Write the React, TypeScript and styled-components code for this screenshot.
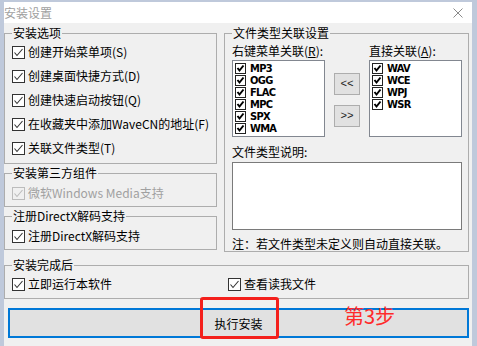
import styled, { createGlobalStyle } from "styled-components";

const GlobalStyle = createGlobalStyle`
  html, body {
    margin: 0;
    padding: 0;
    background: #f0f0f0;
  }
  body {
    font-family: "Noto Sans CJK SC", "Noto Sans", sans-serif;
    font-size: 12px;
    color: #000;
  }
`;

const Window = styled.div`
  position: relative;
  width: 477px;
  height: 346px;
  box-sizing: border-box;
  background: #f0f0f0;
  border-left: 4px solid #bfc9db;
  border-right: 5px solid #bfc9db;
  border-top: 2px solid #bfc9db;
  display: flex;
  flex-direction: column;
  overflow: hidden;
`;

const TitleBar = styled.div`
  height: 21px;
  background: #fff;
  display: flex;
  align-items: center;
  padding-right: 9px;
  color: #a0a0a0;
  font-size: 12px;
`;

const CloseBtn = styled.span`
  margin-left: auto;
  display: flex;
`;

const Body = styled.div`
  display: flex;
  flex-direction: column;
  padding: 3px 3px 0 0;
`;

const TopArea = styled.div`
  display: grid;
  grid-template-columns: 213px 1fr;
  column-gap: 7px;
`;

const LeftColumn = styled.div`
  display: flex;
  flex-direction: column;
  gap: 2px;
`;

const GroupBox = styled.fieldset<{ $pad: string }>`
  margin: 0;
  min-width: 0;
  box-sizing: border-box;
  border: 1px solid #adadad;
  padding: ${(p) => p.$pad};

  legend {
    padding: 0 1px;
    line-height: 14px;
    font-size: 12px;
  }
`;

const CheckRow = styled.div<{ $h: number; $disabled?: boolean }>`
  height: ${(p) => p.$h}px;
  display: flex;
  align-items: center;
  gap: 3px;
  line-height: 14px;
  white-space: nowrap;
  color: ${(p) => (p.$disabled ? "#a0a0a0" : "#000")};
`;

const Box = styled.span<{ $disabled?: boolean }>`
  width: 13px;
  height: 13px;
  box-sizing: border-box;
  flex: none;
  display: inline-flex;
  align-items: center;
  justify-content: center;
  border: 1px solid ${(p) => (p.$disabled ? "#bcbcbc" : "#333")};
  background: ${(p) => (p.$disabled ? "#f0f0f0" : "#fff")};
`;

const ListsGrid = styled.div`
  display: grid;
  grid-template-columns: 93px 26px 93px;
  grid-template-rows: 14px 77px;
  justify-content: space-between;
  row-gap: 2px;
  margin-top: 4px;
`;

const Label = styled.div`
  line-height: 14px;
  white-space: nowrap;
`;

const ListBox = styled.div`
  border: 1px solid #828790;
  background: #fff;
  padding: 1px 2px;
  box-sizing: border-box;
  overflow: hidden;
`;

const ListItem = styled.div`
  height: 12px;
  display: flex;
  align-items: center;
  gap: 4px;
  font-family: "DejaVu Sans Condensed", "Liberation Sans", sans-serif;
  font-weight: bold;
  font-size: 11px;
  letter-spacing: -0.7px;
`;

const SmallBox = styled.span`
  width: 11px;
  height: 11px;
  box-sizing: border-box;
  border: 1px solid #222;
  background: #fff;
  flex: none;
  display: inline-flex;
  align-items: center;
  justify-content: center;
`;

const MoveButtons = styled.div`
  display: flex;
  flex-direction: column;
  gap: 10px;
  padding-top: 13px;
`;

const SmallButton = styled.button`
  width: 26px;
  height: 22px;
  padding: 0;
  background: #e1e1e1;
  border: 1px solid #adadad;
  font-family: "Liberation Mono", monospace;
  font-size: 11px;
  color: #222;
`;

const DescLabel = styled(Label)`
  margin-top: 8px;
`;

const TextArea = styled.div`
  margin-top: 3px;
  height: 68px;
  border: 1px solid #7a7a7a;
  background: #fff;
  box-sizing: border-box;
`;

const Note = styled(Label)`
  margin-top: 7px;
`;

const AfterGroup = styled(GroupBox)`
  margin-top: 6px;
  display: grid;
  grid-template-columns: 216px 1fr;
`;

const InstallButton = styled.button`
  margin: 9px 0 0 4px;
  height: 30px;
  border: 2px solid #0078d7;
  background: #e1e1e1;
  font-family: inherit;
  font-size: 12px;
  color: #000;
`;

const RedBox = styled.div`
  position: absolute;
  left: 196px;
  top: 295px;
  width: 79px;
  height: 42px;
  box-sizing: border-box;
  border: 3px solid #f4201c;
  border-radius: 3px;
`;

const StepText = styled.div`
  position: absolute;
  left: 340px;
  top: 303px;
  font-size: 20px;
  line-height: 22px;
  color: #ff2a2a;
  font-family: "Noto Sans CJK SC", sans-serif;
`;

const Grip = styled.div`
  position: absolute;
  left: 468px;
  top: 171px;
  width: 5px;
  height: 5px;
  box-sizing: border-box;
  border: 1px solid #555;
  background: #fff;
`;

function Check({ disabled }: { disabled?: boolean }) {
  return (
    <Box $disabled={disabled}>
      <svg width="11" height="11" viewBox="0 0 11 11">
        <polyline
          points="1.5,5.5 4,8.5 9.5,2"
          fill="none"
          stroke={disabled ? "#bcbcbc" : "#333"}
          strokeWidth="1.1"
        />
      </svg>
    </Box>
  );
}

function SmallCheck() {
  return (
    <SmallBox>
      <svg width="9" height="9" viewBox="0 0 9 9">
        <polyline points="1.5,4 3.5,6.5 7.5,1.5" fill="none" stroke="#000" strokeWidth="2" />
      </svg>
    </SmallBox>
  );
}

function Option({ text, h, disabled }: { text: string; h: number; disabled?: boolean }) {
  return (
    <CheckRow $h={h} $disabled={disabled}>
      <Check disabled={disabled} />
      <span>{text}</span>
    </CheckRow>
  );
}

const leftTypes = ["MP3", "OGG", "FLAC", "MPC", "SPX", "WMA"];
const rightTypes = ["WAV", "WCE", "WPJ", "WSR"];

export default function App() {
  return (
    <>
      <GlobalStyle />
      <Window>
        <TitleBar>
          安装设置
          <CloseBtn>
            <svg width="10" height="10" viewBox="0 0 10 10">
              <path d="M0.5 0.5 L9.5 9.5 M9.5 0.5 L0.5 9.5" stroke="#8a8a8a" strokeWidth="1" />
            </svg>
          </CloseBtn>
        </TitleBar>
        <Body>
          <TopArea>
            <LeftColumn>
              <GroupBox $pad="0 6px 3px 7px">
                <legend>安装选项</legend>
                <Option h={24} text="创建开始菜单项(S)" />
                <Option h={24} text="创建桌面快捷方式(D)" />
                <Option h={24} text="创建快速启动按钮(Q)" />
                <Option h={24} text="在收藏夹中添加WaveCN的地址(F)" />
                <Option h={24} text="关联文件类型(T)" />
              </GroupBox>
              <GroupBox $pad="3px 6px 3px 7px">
                <legend>安装第三方组件</legend>
                <Option h={20} disabled text="微软Windows Media支持" />
              </GroupBox>
              <GroupBox $pad="3px 6px 3px 7px">
                <legend>注册DirectX解码支持</legend>
                <Option h={20} text="注册DirectX解码支持" />
              </GroupBox>
            </LeftColumn>
            <GroupBox $pad="0 6px 0 7px">
              <legend>文件类型关联设置</legend>
              <ListsGrid>
                <Label>
                  右键菜单关联(<u>R</u>):
                </Label>
                <span />
                <Label>
                  直接关联(<u>A</u>):
                </Label>
                <ListBox>
                  {leftTypes.map((t) => (
                    <ListItem key={t}>
                      <SmallCheck />
                      {t}
                    </ListItem>
                  ))}
                </ListBox>
                <MoveButtons>
                  <SmallButton>&lt;&lt;</SmallButton>
                  <SmallButton>&gt;&gt;</SmallButton>
                </MoveButtons>
                <ListBox>
                  {rightTypes.map((t) => (
                    <ListItem key={t}>
                      <SmallCheck />
                      {t}
                    </ListItem>
                  ))}
                </ListBox>
              </ListsGrid>
              <DescLabel>文件类型说明:</DescLabel>
              <TextArea />
              <Note>注：若文件类型未定义则自动直接关联。</Note>
            </GroupBox>
          </TopArea>
          <AfterGroup $pad="2px 6px 4px 7px">
            <legend>安装完成后</legend>
            <Option h={20} text="立即运行本软件" />
            <Option h={20} text="查看读我文件" />
          </AfterGroup>
          <InstallButton>执行安装</InstallButton>
        </Body>
        <RedBox />
        <StepText>第3步</StepText>
        <Grip />
      </Window>
    </>
  );
}
